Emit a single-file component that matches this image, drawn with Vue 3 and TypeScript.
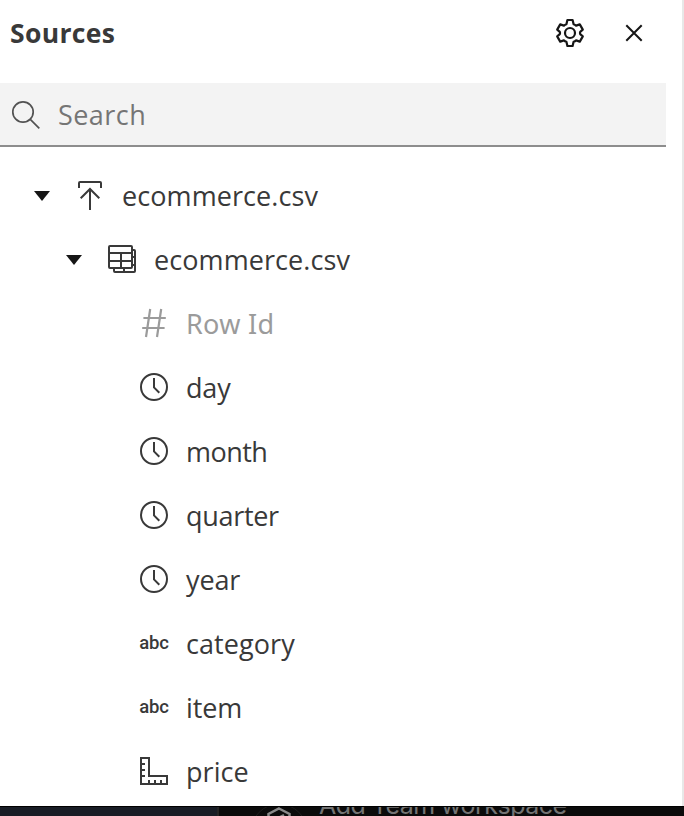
<script setup lang="ts">
type IconName = 'upload' | 'table' | 'hash' | 'clock' | 'text' | 'ruler'

interface SourceItem {
  id: string
  label: string
  icon: IconName
  level: 0 | 1 | 2
  expanded?: boolean
  muted?: boolean
}

const items: SourceItem[] = [
  { id: 'file', label: 'ecommerce.csv', icon: 'upload', level: 0, expanded: true },
  { id: 'table', label: 'ecommerce.csv', icon: 'table', level: 1, expanded: true },
  { id: 'row-id', label: 'Row Id', icon: 'hash', level: 2, muted: true },
  { id: 'day', label: 'day', icon: 'clock', level: 2 },
  { id: 'month', label: 'month', icon: 'clock', level: 2 },
  { id: 'quarter', label: 'quarter', icon: 'clock', level: 2 },
  { id: 'year', label: 'year', icon: 'clock', level: 2 },
  { id: 'category', label: 'category', icon: 'text', level: 2 },
  { id: 'item', label: 'item', icon: 'text', level: 2 },
  { id: 'price', label: 'price', icon: 'ruler', level: 2 },
]
</script>

<template>
  <div class="screen">
    <section class="panel">
      <header class="header">
        <h1 class="title">Sources</h1>
        <button class="icon-button" aria-label="Settings">
          <svg class="icon gear" viewBox="0 0 32 32">
            <path d="M13.400 3h5.200l1 4.200q1.500.4 2.500 1.400l3.700-1.200 3 5.200-2.600 2.300q-.5 1.100 0 2.200l2.600 2.300-3 5.200-3.700-1.200q-1 1-2.500 1.400l-1 4.200h-5.200l-1-4.200q-1.500-.4-2.500-1.400l-3.700 1.200-3-5.200 2.600-2.300q.5-1.100 0-2.200l-2.600-2.300 3-5.200 3.700 1.200q1-1 2.500-1.400z" />
            <circle cx="16" cy="16" r="5" />
          </svg>
        </button>
        <button class="icon-button" aria-label="Close">
          <svg class="icon" viewBox="0 0 32 32"><path d="m8.300 8.300 15.400 15.400m0-15.400L8.300 23.700" /></svg>
        </button>
      </header>
      <div class="search">
        <svg class="icon search-icon" viewBox="0 0 32 32">
          <circle cx="13" cy="13" r="10.200" /><path d="m20.300 20.300 9 9" />
        </svg>
        <span class="placeholder">Search</span>
      </div>
      <ul class="tree">
        <li v-for="item in items" :key="item.id" class="row" :class="[`level-${item.level}`, `item-${item.id}`, { muted: item.muted }]">
          <svg v-if="item.expanded" class="caret" viewBox="0 0 16 10"><path d="M0 0h16L8 10z" /></svg>
          <span v-if="item.icon === 'text'" class="icon text-icon">abc</span>
          <svg v-else class="icon" viewBox="0 0 32 32">
            <path v-if="item.icon === 'upload'" d="M5 9V4q0-1 1-1h20q1 0 1 1v5M16 31V10M6.700 19.300 16 10l9.300 9.300" />
            <template v-else-if="item.icon === 'table'">
              <rect x="3" y="3" width="23" height="22" rx="1" />
              <path d="M3 10h23M3 18h23M15 10v15M8 25v3q0 1 1 1h19q1 0 1-1V8q0-1-1-1h-2M26 14h3M26 22h3M18 25v4" />
            </template>
            <path v-else-if="item.icon === 'hash'" class="hash" d="M12.200 2 8 30M23.200 2 19 30M5.400 11H27.800M4.200 21h22.400" />
            <template v-else-if="item.icon === 'clock'">
              <circle cx="16" cy="16" r="13" /><path d="M16 7v9.400l5.300 5.300" />
            </template>
            <path v-else d="M3 3h8v18h18v8H3zM3 9h4M3 15h4M3 21h4M11 29v-4M17 29v-4M23 29v-4" />
          </svg>
          <span class="label">{{ item.label }}</span>
        </li>
      </ul>
    </section>
    <footer class="backdrop">
      <div class="backdrop-side"></div>
      <div class="backdrop-menu">
        <svg class="workspace-icon" viewBox="0 0 50 50">
          <circle class="ring" cx="25" cy="25" r="28" />
          <path d="m25 1.500 10.500 5.500v12L25 25l-10.500-6v-12zM26 10l4-2" />
        </svg>
        <span class="workspace">Add Team workspace</span>
      </div>
    </footer>
  </div>
</template>

<style>
body {
  margin: 0;
  overflow: hidden;
}
</style>

<style scoped>
.screen {
  display: flex;
  flex-direction: column;
  width: 684px;
  height: 816px;
  overflow: hidden;
  background: #fff;
  color: #393939;
  font-family: "Open Sans", "Noto Sans", sans-serif;
}
.panel {
  box-sizing: border-box;
  height: 806px;
  flex: none;
  border-right: 2px solid #e8e8e8;
}
.header {
  display: flex;
  align-items: center;
  height: 66px;
  margin-bottom: 17px;
  padding: 0 16px 0 10px;
}
.title {
  flex: 1;
  margin: 0;
  font-size: 26.500px;
  font-weight: 700;
  line-height: 64px;
  letter-spacing: 0.350px;
}
.icon-button {
  display: flex;
  justify-content: center;
  width: 64px;
  padding: 0;
  border: 0;
  background: none;
  color: #161616;
}
.icon {
  flex: none;
  width: 32px;
  height: 32px;
  fill: none;
  stroke: currentColor;
  stroke-width: 2;
}
.gear {
  stroke-width: 2.200;
  stroke-linejoin: round;
}
.hash { stroke-width: 2.200; }
.search {
  box-sizing: border-box;
  display: flex;
  align-items: center;
  width: 666px;
  height: 64px;
  padding-left: 10px;
  border-bottom: 2px solid #8d8d8d;
  background: #f3f3f3;
}
.search-icon {
  margin-right: 16px;
  padding-top: 1px;
  color: #525252;
  stroke-width: 1.700;
}
.placeholder {
  padding-top: 1px;
  color: #757575;
  font-size: 27px;
  letter-spacing: 0.450px;
}
.tree {
  margin: 0;
  padding: 16px 0 0;
  list-style: none;
}
.row {
  display: flex;
  align-items: center;
  height: 64px;
}
.level-0 { padding-left: 34px; }
.level-1 { padding-left: 66px; }
.level-2 { padding-left: 138px; }
.caret {
  width: 16px;
  height: 10px;
  margin-right: 24px;
  padding-top: 2px;
  fill: #161616;
}
.label {
  margin-left: 16px;
  padding-top: 2px;
  font-size: 27px;
  line-height: 36px;
  letter-spacing: 0.080px;
  white-space: nowrap;
}
.muted { color: #9b9b9b; }
.muted .label {
  font-family: "Noto Sans", sans-serif;
  letter-spacing: 0.300px;
}
.item-month .label { letter-spacing: -0.550px; }
.item-quarter .label { letter-spacing: -0.300px; }
.item-item .label { letter-spacing: -0.100px; }
.item-day .label,
.item-year .label { letter-spacing: -0.150px; }
.text-icon {
  font-family: Roboto, sans-serif;
  font-size: 18.500px;
  font-weight: 500;
  line-height: 32px;
  letter-spacing: -0.250px;
  text-align: center;
}
.backdrop {
  display: flex;
  height: 10px;
  overflow: hidden;
  box-sizing: border-box;
  border-top: 1px solid #000;
  background: #0b0b0b;
}
.backdrop-side {
  width: 217px;
  border-right: 2px solid #242424;
  background: #181c25;
}
.backdrop-menu {
  display: flex;
  align-items: flex-start;
  padding-left: 35px;
}
.workspace-icon {
  width: 50px;
  height: 50px;
  margin-right: 15px;
  fill: none;
  stroke: #8a8a8a;
  stroke-width: 2.500;
}
.ring { stroke: #1d1d1d; stroke-width: 1; }
.workspace {
  margin-top: -17px;
  color: #737373;
  font-family: Inter, sans-serif;
  font-size: 25px;
  line-height: 30px;
  letter-spacing: -0.530px;
  white-space: nowrap;
}
</style>
